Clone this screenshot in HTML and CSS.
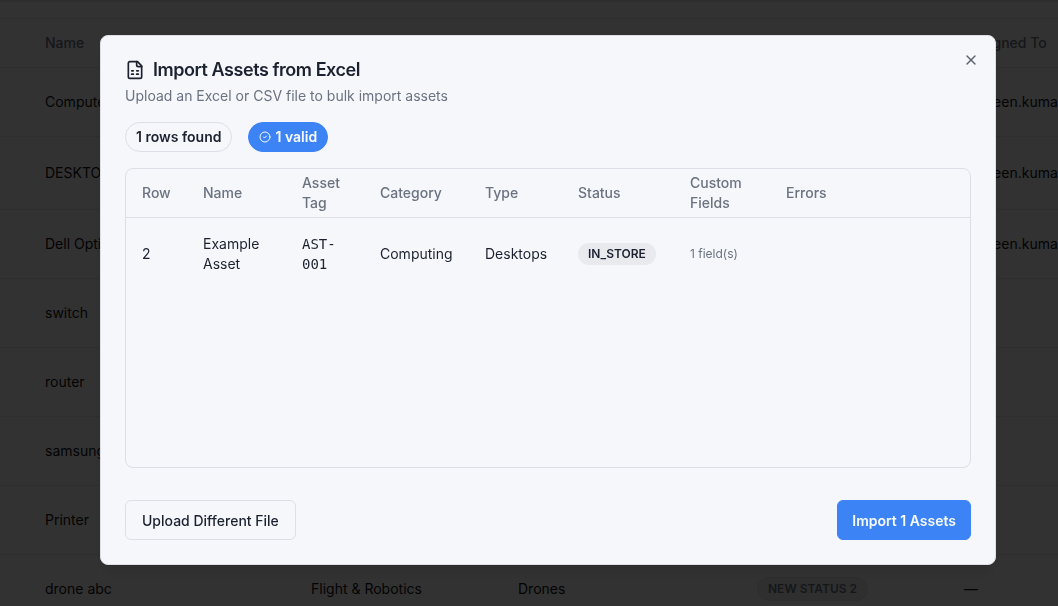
FILE: index.html
```html
<!DOCTYPE html>
<html lang="en">
<head>
  <meta charset="UTF-8" />
  <meta name="viewport" content="width=device-width, initial-scale=1.0"/>
  <title>Assets</title>
  <link rel="stylesheet" href="styles.css">
</head>
<body>

  <main class="page">
    <div class="toolbar"></div>
    <table class="assets">
      <colgroup>
        <col class="a-name">
        <col class="a-category">
        <col class="a-type">
        <col class="a-status">
        <col class="a-user">
      </colgroup>
      <thead>
        <tr><th>Name</th><th>Category</th><th>Type</th><th>Status</th><th>Assigned To</th></tr>
      </thead>
      <tbody>
        <tr><td>Computer</td><td></td><td></td><td></td><td>praveen.kumar</td></tr>
        <tr class="tall"><td>DESKTOP</td><td></td><td></td><td></td><td>praveen.kumar</td></tr>
        <tr><td>Dell OptiPlex</td><td></td><td></td><td></td><td>praveen.kumar</td></tr>
        <tr><td>switch</td><td></td><td></td><td></td><td></td></tr>
        <tr><td>router</td><td></td><td></td><td></td><td></td></tr>
        <tr><td>samsung</td><td></td><td></td><td></td><td></td></tr>
        <tr><td>Printer</td><td></td><td></td><td></td><td></td></tr>
        <tr><td>drone abc</td><td>Flight &amp; Robotics</td><td>Drones</td><td><span class="status-badge">NEW STATUS 2</span></td><td>—</td></tr>
      </tbody>
    </table>
  </main>

  <!-- Import popup -->
  <div class="overlay">
    <div class="modal" role="dialog" aria-labelledby="modalTitle">
      <button class="close-btn" aria-label="Close">
        <svg width="16" height="16" viewBox="0 0 24 24" fill="none" stroke="currentColor" stroke-width="2" stroke-linecap="round" stroke-linejoin="round"><path d="M18 6 6 18"/><path d="m6 6 12 12"/></svg>
      </button>

      <div class="modal-header">
        <h2 id="modalTitle">
          <svg width="20" height="20" viewBox="0 0 24 24" fill="none" stroke="currentColor" stroke-width="2" stroke-linecap="round" stroke-linejoin="round"><path d="M15 2H6a2 2 0 0 0-2 2v16a2 2 0 0 0 2 2h12a2 2 0 0 0 2-2V7Z"/><path d="M14 2v4a2 2 0 0 0 2 2h4"/><path d="M8 13h2"/><path d="M14 13h2"/><path d="M8 17h2"/><path d="M14 17h2"/></svg>
          Import Assets from Excel
        </h2>
        <p>Upload an Excel or CSV file to bulk import assets</p>
      </div>

      <div class="badges">
        <span class="badge">1 rows found</span>
        <span class="badge badge-valid">
          <svg width="12" height="12" viewBox="0 0 24 24" fill="none" stroke="currentColor" stroke-width="2" stroke-linecap="round" stroke-linejoin="round"><circle cx="12" cy="12" r="10"/><path d="m9 12 2 2 4-4"/></svg>
          1 valid
        </span>
      </div>

      <div class="preview">
        <table>
          <colgroup>
            <col class="c-row">
            <col class="c-name">
            <col class="c-tag">
            <col class="c-category">
            <col class="c-type">
            <col class="c-status">
            <col class="c-fields">
            <col>
          </colgroup>
          <thead>
            <tr>
              <th>Row</th>
              <th>Name</th>
              <th>Asset Tag</th>
              <th>Category</th>
              <th>Type</th>
              <th>Status</th>
              <th>Custom Fields</th>
              <th>Errors</th>
            </tr>
          </thead>
          <tbody>
            <tr>
              <td>2</td>
              <td>Example Asset</td>
              <td class="mono">AST-001</td>
              <td>Computing</td>
              <td>Desktops</td>
              <td><span class="status-badge">IN_STORE</span></td>
              <td class="fields">1 field(s)</td>
              <td></td>
            </tr>
          </tbody>
        </table>
      </div>

      <div class="modal-footer">
        <button class="btn">Upload Different File</button>
        <button class="btn btn-primary">Import 1 Assets</button>
      </div>
    </div>
  </div>

</body>
</html>
```
FILE: styles.css
```css
* {
  box-sizing: border-box;
}

body {
  margin: 0;
  font-family: "Inter", sans-serif;
  font-size: 14px;
  line-height: 20px;
  color: #1c2130;
  background: #fafafa;
  height: 100vh;
  overflow: hidden;
}

h2, p {
  margin: 0;
}

button {
  font-family: inherit;
  cursor: pointer;
}

table {
  width: 100%;
  border-collapse: separate;
  border-spacing: 0;
  table-layout: fixed;
}

th {
  text-align: left;
  font-weight: 500;
  color: #6b7280;
}

/* page behind the popup */
.toolbar {
  height: 19px;
  border-top: 2px solid #e4e6ea;
  border-bottom: 1px solid #e4e6ea;
}

.assets {
  min-width: 1096px;
  color: #0f1115;
}

.assets th,
.assets td {
  height: 69px;
  padding: 0 16px;
  border-bottom: 1px solid #e4e6ea;
  white-space: nowrap;
}

.assets th {
  height: 49px;
}

.assets th:first-child,
.assets td:first-child {
  padding-left: 45px;
}

.assets .tall td {
  height: 73px;
}

.assets .status-badge {
  border: 1px solid #dcdfe5;
  color: #6b7280;
}

.a-name { width: 295px; }
.a-category { width: 207px; }
.a-type { width: 239px; }
.a-status { width: 207px; }

.overlay {
  position: fixed;
  inset: 0;
  display: flex;
  justify-content: center;
  align-items: flex-start;
  padding: 35px 0 0 38px;
  background: rgba(0, 0, 0, 0.8);
}

.modal {
  position: relative;
  display: flex;
  flex-direction: column;
  gap: 16px;
  width: 100%;
  max-width: 896px;
  padding: 24px;
  background: #f5f7fa;
  border: 1px solid #dcdfe5;
  border-radius: 8px;
  box-shadow: 0 10px 15px -3px rgba(0, 0, 0, 0.1), 0 4px 6px -4px rgba(0, 0, 0, 0.1);
}

.close-btn {
  position: absolute;
  top: 16px;
  right: 16px;
  display: flex;
  padding: 0;
  border: none;
  background: none;
  color: #5c606b;
}

.modal-header {
  display: flex;
  flex-direction: column;
  gap: 6px;
}

.modal-header h2 {
  display: flex;
  align-items: center;
  gap: 8px;
  font-size: 18px;
  line-height: 20px;
  font-weight: 600;
  letter-spacing: -0.025em;
}

.modal-header p {
  color: #6b7280;
}

.badges {
  display: flex;
  gap: 16px;
}

.badge {
  display: flex;
  align-items: center;
  gap: 4px;
  padding: 4px 10px;
  border: 1px solid #dcdfe5;
  border-radius: 999px;
  font-weight: 600;
}

.badge-valid {
  background: #3c83f6;
  border-color: #3c83f6;
  color: #f8fafc;
}

.preview {
  height: 300px;
  overflow: auto;
  border: 1px solid #dcdfe5;
  border-radius: 8px;
}

.preview th {
  height: 49px;
  padding: 0 16px;
  border-bottom: 1px solid #dcdfe5;
}

.preview td {
  padding: 16px;
}

.c-row { width: 61px; }
.c-name { width: 99px; }
.c-tag { width: 78px; }
.c-category { width: 105px; }
.c-type { width: 93px; }
.c-status { width: 112px; }
.c-fields { width: 96px; }

.mono {
  font-family: "DejaVu Sans Mono", monospace;
}

.status-badge {
  display: inline-block;
  padding: 3px 10px;
  border-radius: 999px;
  background: #e8eaee;
  font-size: 12px;
  line-height: 16px;
  font-weight: 600;
}

.preview .fields {
  font-size: 12px;
  color: #6b7280;
}

.modal-footer {
  display: flex;
  justify-content: space-between;
  padding-top: 16px;
}

.btn {
  height: 40px;
  padding: 0 16px;
  border: 1px solid #dcdfe5;
  border-radius: 6px;
  background: #f5f7fa;
  color: #1c2130;
  font-size: 14px;
  font-weight: 500;
}

.btn-primary {
  padding: 0 14px;
  background: #3c83f6;
  border-color: #3c83f6;
  color: #f8fafc;
  font-weight: 600;
}
```
